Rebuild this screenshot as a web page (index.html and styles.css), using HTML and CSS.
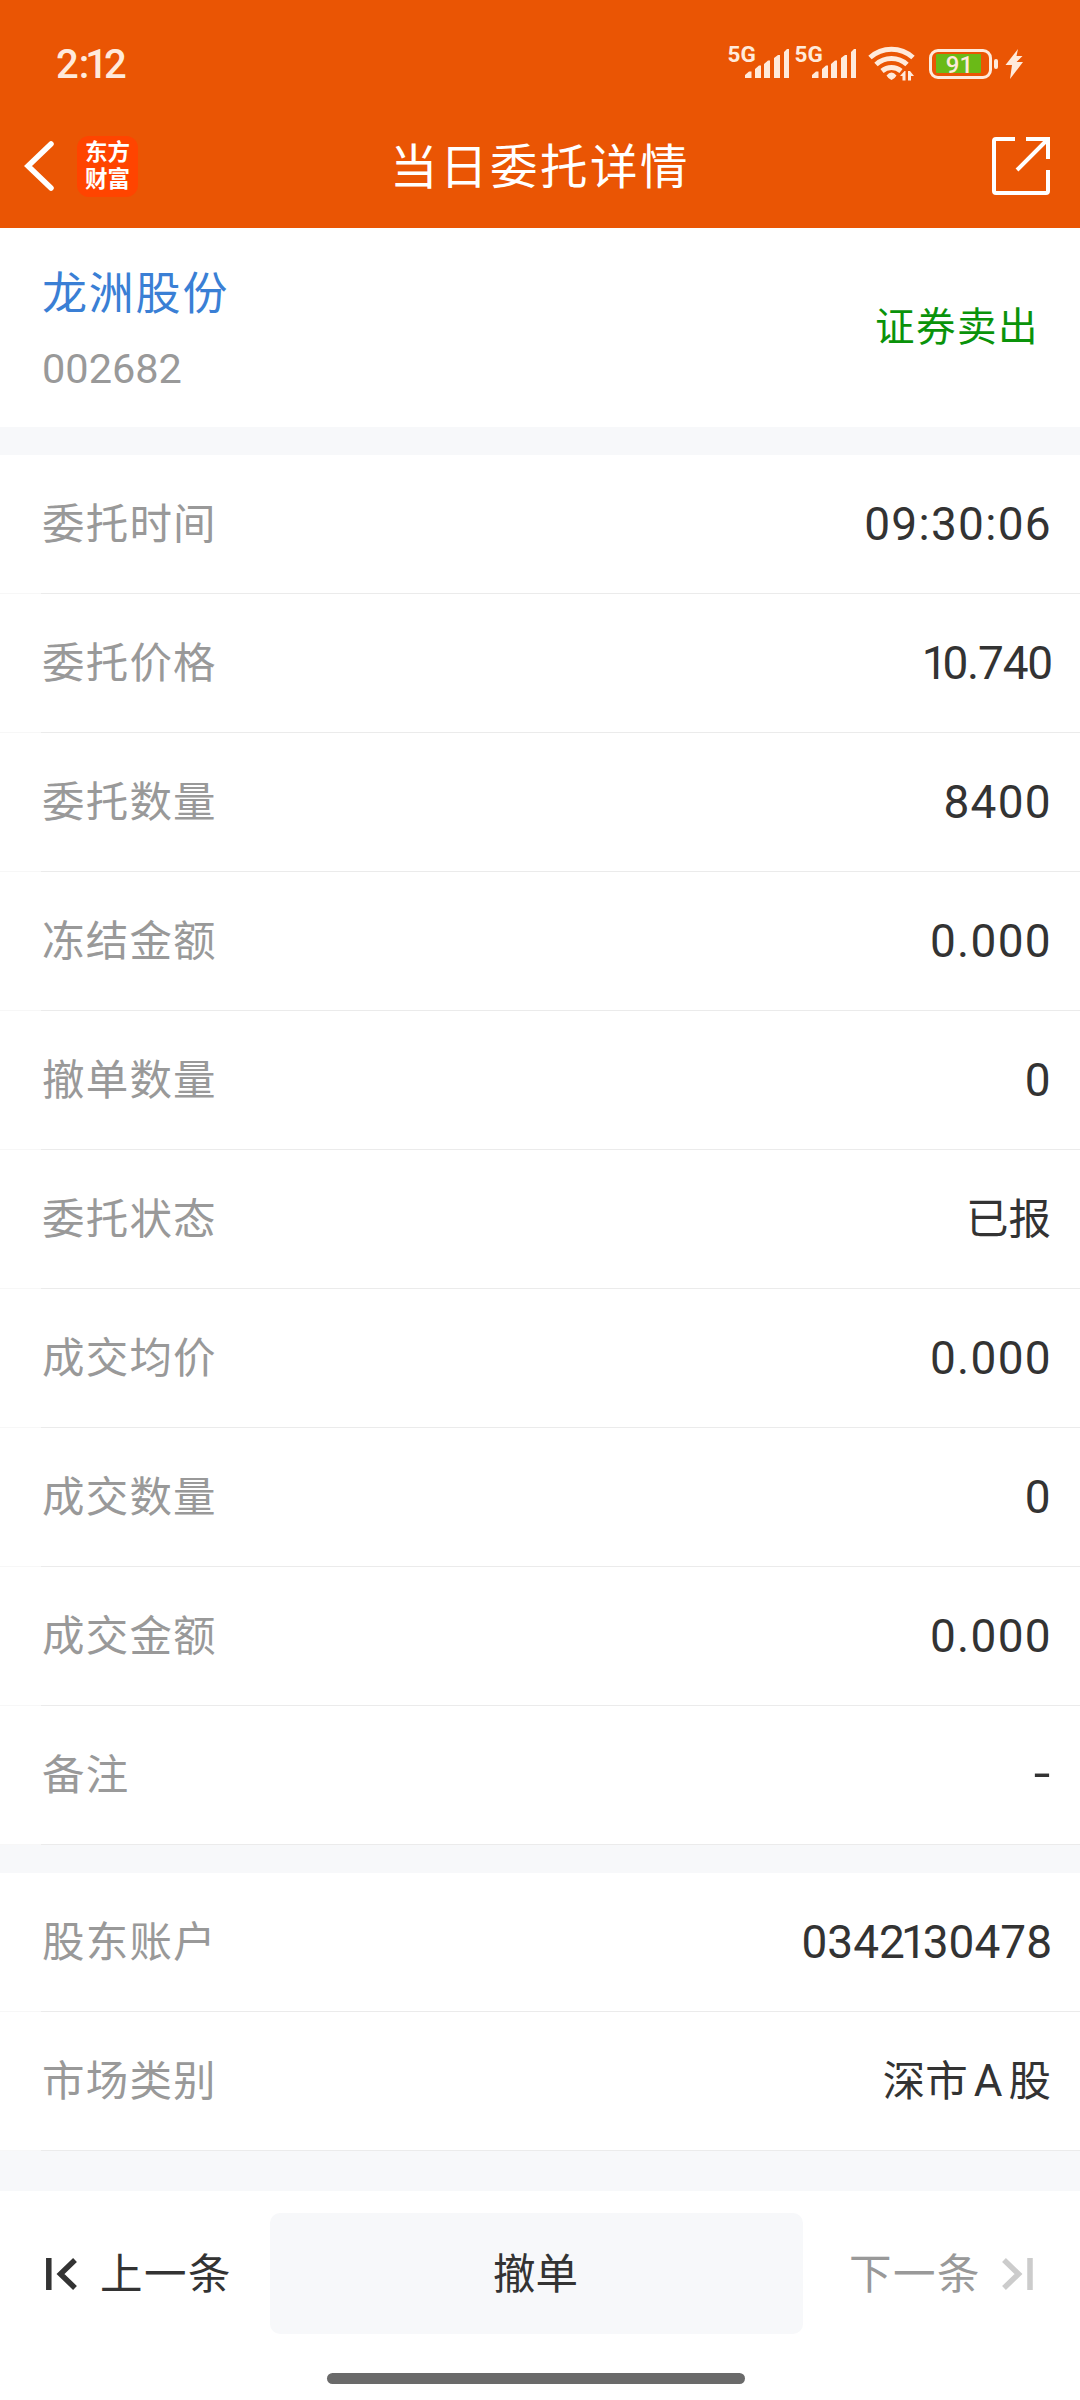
FILE: index.html
```html
<!DOCTYPE html>
<html lang="zh-CN">
<head>
  <meta charset="UTF-8" />
  <meta name="viewport" content="width=device-width, initial-scale=1.0" />
  <title>当日委托详情</title>
  <link rel="stylesheet" href="styles.css">
</head>
<body>

  <header class="header">
    <!-- Phone status bar -->
    <div class="status-bar">
      <span class="clock">2:<span class="one">1</span>2</span>
      <div class="status-icons">
        <svg class="signal" width="64" height="36" viewBox="0 0 64 36">
          <text x="0.500" y="18">5G</text>
          <path d="M18 34v-3l4-3.500h2.500v6.500zM28 34v-9l4-3.500h2v12.500zM37 34v-14l4-3.500h2v17.500zM47 34v-20l4-3h2v23zM57 34v-26l3-3h2v29z" />
        </svg>
        <svg class="signal" width="64" height="36" viewBox="0 0 64 36">
          <text x="0.500" y="18">5G</text>
          <path d="M18 34v-3l4-3.500h2.500v6.500zM28 34v-9l4-3.500h2v12.500zM37 34v-14l4-3.500h2v17.500zM47 34v-20l4-3h2v23zM57 34v-26l3-3h2v29z" />
        </svg>
        <svg class="wifi" width="48" height="36" viewBox="0 0 48 36">
          <path class="arc" d="M2 13.500A32 32 0 0 1 45 13.500M8 20.500A23 23 0 0 1 39 20.500M14 27A15 15 0 0 1 33 27" />
          <path class="fill" d="M18.500 31.500q5-6 10 0q-1.500 3-5 4.500q-3.500-1.500-5-4.500zM32 32l4.500-5h1v9.500h-3v-4.500zM40 27h2l4 5h-3v4.500h-3z" />
        </svg>
        <svg class="battery" width="96" height="36" viewBox="0 0 96 36">
          <rect class="shell" x="2.500" y="6.500" width="60" height="27" rx="7.500" />
          <rect class="level" x="8" y="10" width="45" height="19" rx="1" />
          <rect class="fill" x="66" y="15" width="4" height="10" rx="2" />
          <text x="31.500" y="28.500">91</text>
          <path class="fill" d="M90 5l-12.500 16h6.500l-2 14l13-17h-6.500l6-6h-6z" />
        </svg>
      </div>
    </div>

    <!-- Title bar -->
    <div class="title-bar">
      <div class="nav-left">
        <svg class="back" width="34" height="54" viewBox="0 0 34 54"><path d="M29 5L6 27l23 22" /></svg>
        <div class="app-logo"><span>东方</span><span>财富</span></div>
      </div>
      <h1>当日委托详情</h1>
      <svg class="share" width="60" height="60" viewBox="0 0 60 60">
        <path d="M24 3H5q-2 0-2 2v50q0 2 2 2h50q2 0 2-2V34M35 3h22v20M26 34L56 4" />
      </svg>
    </div>
  </header>

  <section class="stock">
    <div class="stock-info">
      <div class="stock-name">龙洲股份</div>
      <div class="stock-code">002682</div>
    </div>
    <div class="side">证券卖出</div>
  </section>

  <!-- Order details -->
  <section class="list">
    <div class="row"><span class="label">委托时间</span><span class="num">09:30:06</span></div>
    <div class="row"><span class="label">委托价格</span><span class="num price"><span class="one">1</span>0.740</span></div>
    <div class="row"><span class="label">委托数量</span><span class="num">8400</span></div>
    <div class="row"><span class="label">冻结金额</span><span class="num">0.000</span></div>
    <div class="row"><span class="label">撤单数量</span><span class="num">0</span></div>
    <div class="row"><span class="label">委托状态</span><span class="value">已报</span></div>
    <div class="row"><span class="label">成交均价</span><span class="num">0.000</span></div>
    <div class="row"><span class="label">成交数量</span><span class="num">0</span></div>
    <div class="row"><span class="label">成交金额</span><span class="num">0.000</span></div>
    <div class="row"><span class="label">备注</span><span class="num dash">-</span></div>
  </section>

  <!-- Account -->
  <section class="list">
    <div class="row"><span class="label">股东账户</span><span class="num account">0342<span class="one">1</span>30478</span></div>
    <div class="row"><span class="label">市场类别</span><span class="value">深市<span class="latin">A</span>股</span></div>
  </section>

  <footer class="footer">
    <div class="actions">
      <div class="pager prev">
        <svg width="32" height="32" viewBox="0 0 32 32"><path d="M2.800 0v32M29 2L14.500 16L29 30" /></svg>
        <span>上一条</span>
      </div>
      <button class="cancel">撤单</button>
      <div class="pager next">
        <span>下一条</span>
        <svg width="32" height="32" viewBox="0 0 32 32"><path d="M29 0v32M3 2l14.500 14L3 30" /></svg>
      </div>
    </div>
    <div class="home-bar"></div>
  </footer>

</body>
</html>
```

FILE: styles.css
```css
* {
  box-sizing: border-box;
}
body {
  margin: 0;
  width: 1080px;
  height: 2400px;
  overflow: hidden;
  background: #f7f8fa;
  color: #333;
  font-family: Roboto, "Noto Sans CJK SC", sans-serif;
}
svg {
  display: block;
  flex: none;
  overflow: visible;
}

/* header */
.header {
  height: 228px;
  background: #ea5504;
}
.status-bar {
  display: flex;
  justify-content: space-between;
  height: 128px;
  padding: 44px 56px 0 56px;
}
.clock {
  color: #ffeadb;
  font-size: 40px;
  line-height: 42px;
  font-weight: 500;
}
.one {
  margin: 0 -4px;
}
.status-icons {
  display: flex;
  color: #ffeadb;
}
.status-icons svg {
  fill: #ffeadb;
}
.signal {
  margin-right: 3px;
}
.signal text {
  font-size: 22.500px;
  font-weight: bold;
}
.wifi {
  margin: 0 12px 0 7px;
}
.wifi .arc {
  fill: none;
  stroke: #ffeadb;
  stroke-width: 5;
}
.battery .shell {
  fill: none;
  stroke: #ffeadb;
  stroke-width: 3;
}
.battery .level {
  fill: #6aba17;
}
.battery text {
  font-size: 24px;
  font-weight: 500;
  text-anchor: middle;
}
.title-bar {
  display: grid;
  grid-template-columns: 300px 1fr 300px;
  align-items: center;
  height: 75px;
  padding: 0 29px 0 22px;
}
.nav-left {
  display: flex;
  align-items: center;
  gap: 21px;
}
.back path,
.share path {
  fill: none;
  stroke: #fff;
}
.back path {
  stroke-width: 5.500;
  stroke-linecap: round;
}
.share {
  justify-self: end;
}
.share path {
  stroke-width: 4;
}
.app-logo {
  display: flex;
  flex-direction: column;
  justify-content: center;
  align-items: center;
  width: 61px;
  height: 61px;
  border-radius: 12px;
  background: #ff4400;
  color: #fff;
  font-size: 22.500px;
  line-height: 27px;
  font-weight: 700;
}
h1 {
  margin: 0;
  padding: 4px 0 0 7px;
  color: #fff;
  font-size: 47.500px;
  line-height: 72px;
  font-weight: 400;
  letter-spacing: 2.500px;
  text-align: center;
  white-space: nowrap;
}

/* stock */
.stock {
  display: flex;
  justify-content: space-between;
  align-items: center;
  height: 199px;
  padding: 0 41px 0 42px;
  margin-bottom: 28px;
  background: #fff;
}
.stock-info {
  padding-top: 8px;
}
.stock-name {
  color: #3a7fd5;
  font-size: 45px;
  line-height: 75px;
  letter-spacing: 1.800px;
}
.stock-code {
  color: #999;
  font-size: 41.500px;
  line-height: 74px;
}
.side {
  padding-top: 1px;
  color: #0a930a;
  font-size: 39.500px;
  line-height: 60px;
  letter-spacing: 1.500px;
}

/* detail rows */
.list {
  margin-bottom: 28px;
}
.row {
  display: flex;
  justify-content: space-between;
  align-items: center;
  height: 139px;
  padding: 0 29px 0 42px;
  line-height: 60px;
  background: linear-gradient(to right, #f7f7f7 41px, #ebebeb 41px) bottom / 100% 1px no-repeat #fff;
}
.label {
  color: #999;
  font-size: 42.500px;
  letter-spacing: 1.200px;
}
.value {
  font-size: 42.500px;
}
.latin {
  margin: 0 6px;
  font-size: 44px;
}
.num {
  margin-right: -1px;
  padding-bottom: 2px;
  font-size: 46px;
  letter-spacing: 1.300px;
}
.price {
  letter-spacing: -1.200px;
}
.account {
  letter-spacing: 0;
}
.dash {
  padding-bottom: 6px;
  transform: scaleX(1.3);
  transform-origin: right;
}

/* footer */
.footer {
  position: absolute;
  left: 0;
  top: 2191px;
  width: 1080px;
  height: 209px;
  padding-top: 22px;
  background: #fff;
}
.actions {
  display: flex;
  align-items: center;
  padding: 0 47px 0 46px;
}
.pager {
  display: flex;
  align-items: center;
  width: 224px;
  font-size: 42.500px;
  line-height: 60px;
  letter-spacing: 1.500px;
  white-space: nowrap;
}
.pager span {
  padding-top: 2px;
}
.pager path {
  fill: none;
  stroke: #333;
  stroke-width: 5.500;
}
.prev {
  gap: 22px;
}
.next {
  justify-content: flex-end;
  gap: 20px;
  width: 230px;
  color: #999;
}
.next path {
  stroke: #ccc;
}
.cancel {
  width: 533px;
  height: 121px;
  padding: 2px 2px 0 0;
  border: 0;
  border-radius: 10px;
  background: #f7f8fa;
  color: #333;
  font-family: inherit;
  font-size: 42.500px;
  line-height: 60px;
}
.home-bar {
  width: 418px;
  height: 11px;
  margin: 39px 0 0 327px;
  border-radius: 6px;
  background: #6a6a6a;
}
```
